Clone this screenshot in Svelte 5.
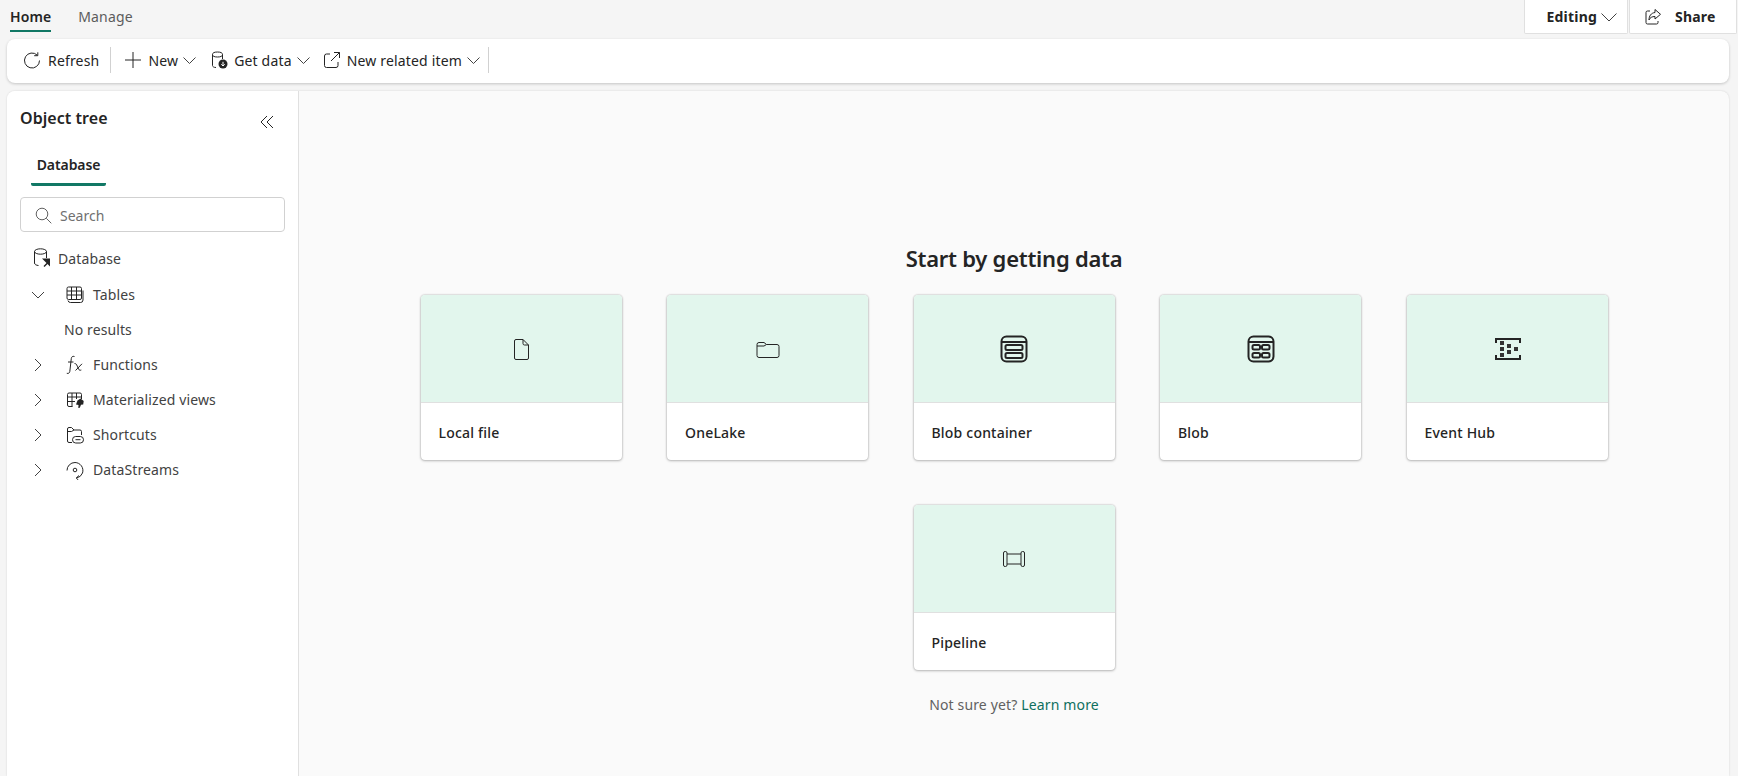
<script>
  const cards = [
    { label: 'Local file', icon: 'file' },
    { label: 'OneLake', icon: 'folder' },
    { label: 'Blob container', icon: 'container' },
    { label: 'Blob', icon: 'blob' },
    { label: 'Event Hub', icon: 'hub' },
    { label: 'Pipeline', icon: 'pipe' }
  ];
  const tree = [
    { label: 'Functions', icon: 'fx' },
    { label: 'Materialized views', icon: 'mat' },
    { label: 'Shortcuts', icon: 'short' },
    { label: 'DataStreams', icon: 'stream' }
  ];
</script>

{#snippet chevronDown()}
  <svg class="chev dd" width="13" height="14" viewBox="0 0 13 14"><path d="M.5 4.500 6.500 10.500l6-6" /></svg>
{/snippet}

{#snippet treeIcon(name)}
  <svg class="ti" width="20" height="20" viewBox="0 0 20 20">
    {#if name === 'fx'}
      <path d="M9.500 1.500c-2-.6-3 .4-3.200 2L4.800 16.500c-.3 1.600-1.300 2.200-3 1.800M3 7h5.500M9.500 8.500c1.500 0 2 .8 2.800 2.700l1.200 2.800c.6 1.200 1.500 1.500 2.800 1M17 8.800l-6.500 6.700" />
    {:else if name === 'mat'}
      <path d="M7.500 16.500H4a1.500 1.500 0 0 1-1.500-1.500V4.500A1.500 1.500 0 0 1 4 3h11a1.500 1.500 0 0 1 1.500 1.500V9M2.500 7h14M2.500 11.500H10M7 3v13.500M11.500 3v6" />
      <path class="fill" d="M15.500 8.500 12.500 10.500l-1.500 4 2.500.5-.2 3 1.500-.2 1.200-3 2.200-.3.500-3.500z" />
    {:else if name === 'short'}
      <path d="M7 17.500H4a1.500 1.500 0 0 1-1.500-1.500V4A1.500 1.500 0 0 1 4 2.500h2.500L9 5h6a1.500 1.500 0 0 1 1.500 1.500V10M2.500 6.500 6.500 6.500 9 5" />
      <rect x="7.500" y="11.500" width="11" height="6.500" rx="3.200" /><path d="M10.500 14.700h5" />
    {:else}
      <path d="M2 10.500A8 8 0 0 1 10 2.500a8 8 0 0 1 7.500 10.500 8 8 0 0 1-6 5M14 15.500l-2.800 2.500 2.300 2.200" />
      <circle cx="10" cy="10" r="1.800" />
    {/if}
  </svg>
{/snippet}

{#snippet cardIcon(name)}
  <svg class="ci" width="28" height="28" viewBox="0 0 28 28">
    {#if name === 'file'}
      <path d="M9 4.500h7l5.500 5.500v13a1.500 1.500 0 0 1-1.500 1.500H9A1.500 1.500 0 0 1 7.500 23V6A1.500 1.500 0 0 1 9 4.500zM16 4.500V8.500A1.500 1.500 0 0 0 17.500 10h4" />
    {:else if name === 'folder'}
      <path d="M5 7.500h5l2.500 2H23a2 2 0 0 1 2 2v9a2 2 0 0 1-2 2H5a2 2 0 0 1-2-2v-11a2 2 0 0 1 2-2zM3 11h7l2.500-1.500" />
    {:else if name === 'container'}
      <g class="thick">
        <rect x="1.500" y="1.500" width="25" height="25" rx="5" />
        <path d="M2 7h24" />
        <rect x="5.500" y="10" width="17" height="5" rx="1.500" />
        <rect x="5.500" y="18" width="17" height="5" rx="1.500" />
      </g>
    {:else if name === 'blob'}
      <g class="thick">
        <rect x="1.500" y="1.500" width="25" height="25" rx="5" />
        <path d="M2 7h24" />
        <rect x="5.500" y="10" width="7.500" height="4.500" rx="1.500" />
        <rect x="15" y="10" width="7.500" height="4.500" rx="1.500" />
        <rect x="5.500" y="18" width="7.500" height="4.500" rx="1.500" />
        <rect x="15" y="18" width="7.500" height="4.500" rx="1.500" />
      </g>
    {:else if name === 'hub'}
      <g class="thick">
        <path d="M3 8V4h24V8M3 20v4h24v-4" />
      </g>
      <g class="solid">
        <rect x="7" y="6" width="4" height="4" />
        <rect x="7" y="12" width="4" height="4" />
        <rect x="7" y="18" width="4" height="4" />
        <rect x="14" y="9" width="4" height="4" />
        <rect x="14" y="15" width="4" height="4" />
        <rect x="21" y="12" width="4" height="4" />
      </g>
    {:else}
      <rect x="3.500" y="6.500" width="3.500" height="15" rx="1.500" />
      <rect x="21" y="6.500" width="3.500" height="15" rx="1.500" />
      <path d="M7 9h14M7 19h14" />
    {/if}
  </svg>
{/snippet}

<div class="page">
  <header class="tabs">
    <nav class="tablist">
      <span class="tab on">Home</span>
      <span class="tab">Manage</span>
    </nav>
    <div class="actions">
      <button class="act edit">Editing
        <svg class="chev" width="16" height="16" viewBox="0 0 16 16"><path d="M.5 4.500 8 12l7.500-7.500" /></svg>
      </button>
      <button class="act share">
        <svg class="ti" width="18" height="18" viewBox="0 0 18 18"><path d="M6 3H3.500A1.500 1.500 0 0 0 2 4.500v10A1.500 1.500 0 0 0 3.500 16h9a1.500 1.500 0 0 0 1.500-1.500V13M11 1.500l5.500 4.800L11 11V8.500c-3 0-5 1-6 3.500 0-4 2-7 6-7.500z" /></svg>
        <span>Share</span>
      </button>
    </div>
  </header>

  <div class="toolbar">
    <button class="tb first">
      <svg class="ti" width="18" height="18" viewBox="0 0 18 18"><path d="M14.800 1.300v3.400h-3.600M14.300 4.200A7.500 7.500 0 1 0 16.500 9.500" /></svg>
      Refresh
    </button>
    <i class="sep"></i>
    <button class="tb new">
      <svg class="ti" width="18" height="18" viewBox="0 0 18 18"><path d="M9 1v16M1 9h16" /></svg>
      New {@render chevronDown()}
    </button>
    <button class="tb">
      <svg class="ti" width="18" height="18" viewBox="0 0 18 18"><ellipse cx="7.500" cy="3.500" rx="5" ry="2.500" /><path d="M2.500 3.500v11c0 1.200 1.500 2 3.500 2M12.500 3.500V8" /><circle class="fill" cx="13" cy="13" r="4.500" /><path class="knock" d="M13 10.800v4M11.300 13.300l1.700 1.700 1.700-1.700" /></svg>
      Get data {@render chevronDown()}
    </button>
    <button class="tb last">
      <svg class="ti" width="18" height="18" viewBox="0 0 18 18"><path d="M7 3H3.500A2 2 0 0 0 1.500 5v9.500a2 2 0 0 0 2 2H13a2 2 0 0 0 2-2V11M11 1.500h5.500V7M16.500 1.500 8 10" /></svg>
      New related item {@render chevronDown()}
    </button>
    <i class="sep"></i>
  </div>

  <div class="panel">
    <aside class="side">
      <div class="side-head">
        <h2>Object tree</h2>
        <svg class="ti" width="14" height="14" viewBox="0 0 14 14"><path d="M7 1 1 7l6 6M13 1 7 7l6 6" /></svg>
      </div>
      <div class="side-tab"><span>Database</span></div>
      <div class="search">
        <svg class="ti" width="17" height="17" viewBox="0 0 17 17"><circle cx="7" cy="7" r="5.800" /><path d="m11.300 11.300 5 5" /></svg>
        <span>Search</span>
      </div>
      <div class="row root">
        <svg class="ti" width="18" height="20" viewBox="0 0 18 20"><ellipse cx="7.500" cy="3.500" rx="6" ry="2.700" /><path d="M1.500 3.500v11.500c0 1.500 1.800 2.300 4 2.500M13.500 3.500V10" /><path class="fill" d="M9 10.500h8v8l-2.500-2.500-3 3-1-1 3-3z" /></svg>
        <span>Database</span>
      </div>
      <div class="row">
        <svg class="chev tw" width="14" height="14" viewBox="0 0 14 14"><path d="M1 4l6 6 6-6" /></svg>
        <svg class="ti" width="20" height="20" viewBox="0 0 20 20"><path d="M18 5.500V15a2.500 2.500 0 0 1-2.500 2.500H5.500a2.500 2.500 0 0 1-2.500-2M3.500 2h11.500A1.500 1.500 0 0 1 16.500 3.500V13a1.500 1.500 0 0 1-1.500 1.500H3.500A1.500 1.500 0 0 1 2 13V3.500A1.500 1.500 0 0 1 3.500 2zM2 6h14.500M2 10h14.500M6.500 2v12.500M11.500 2v12.500" /></svg>
        <span>Tables</span>
      </div>
      <div class="none">No results</div>
      {#each tree as t}
        <div class="row">
          <svg class="chev tw" width="14" height="14" viewBox="0 0 14 14"><path d="M4 1l6 6-6 6" /></svg>
          {@render treeIcon(t.icon)}
          <span>{t.label}</span>
        </div>
      {/each}
    </aside>

    <main class="main">
      <h1>Start by getting data</h1>
      <div class="grid">
        {#each cards as c}
          <div class="card">
            <div class="art">{@render cardIcon(c.icon)}</div>
            <div class="name">{c.label}</div>
          </div>
        {/each}
      </div>
      <p class="more">Not sure yet? <span>Learn more</span></p>
    </main>
  </div>
</div>

<style>
  :global(body) {
    margin: 0;
    background: #f5f5f5;
    font-family: "Noto Sans", "Open Sans", sans-serif;
    color: #242424;
    overflow: hidden;
  }
  svg { flex: none; fill: none; stroke: #242424; stroke-width: 1; display: block; }
  svg .fill { fill: #242424; stroke: none; }
  svg .knock { stroke: #fff; }
  svg .thick { stroke-width: 2; }
  svg .solid { fill: #333; stroke: none; }
  button { font: inherit; color: inherit; background: none; border: 0; padding: 0; }

  .page { height: 776px; display: flex; flex-direction: column; }

  .tabs { height: 39px; display: flex; justify-content: space-between; }
  .tablist { display: flex; gap: 27px; padding-left: 10px; }
  .tab { font-size: 14px; height: 32px; line-height: 33px; box-sizing: border-box; color: #5c5c5c; letter-spacing: 0.15px; }
  .tab.on { color: #242424; font-weight: 600; border-bottom: 2px solid #117865; letter-spacing: 0.1px; }
  .actions { display: flex; gap: 1px; padding-right: 1px; }
  .act {
    height: 34px;
    background: #fff;
    border: 1px solid #e0e0e0;
    border-top: 0;
    border-radius: 0 0 2px 2px;
    box-sizing: border-box;
    font-size: 14px;
    font-weight: 700;
    display: flex;
    align-items: center;
    letter-spacing: 0.2px;
  }
  .edit { width: 104px; justify-content: flex-end; padding-right: 10px; gap: 4px; }
  .share { width: 108px; padding-left: 14px; gap: 13px; }

  .toolbar {
    height: 44px;
    box-sizing: border-box;
    padding-bottom: 2px;
    margin: 0 9px 8px 7px;
    background: #fff;
    border-radius: 8px;
    box-shadow: 0 1px 3px rgba(0, 0, 0, 0.2);
    display: flex;
    align-items: center;
    padding-left: 16px;
    font-size: 14px;
    flex: none;
  }
  .tb { display: flex; align-items: center; gap: 6px; letter-spacing: 0.17px; margin-right: 13px; font-size: 14px; }
  .tb.first { margin-right: 11px; gap: 7px; }
  .tb.last { margin-right: 8px; }
  .new { margin-left: 13px; margin-right: 14px; }
  .chev { stroke: #424242; }
  .dd { margin-left: -1px; }
  .sep { width: 1px; height: 26px; background: #d1d1d1; }

  .panel {
    flex: 1;
    margin: 0 9px 0 7px;
    background: #fafafa;
    border-radius: 8px 8px 0 0;
    box-shadow: 0 0 2px rgba(0, 0, 0, 0.15);
    display: flex;
    min-height: 0;
    overflow: hidden;
  }
  .side {
    width: 292px;
    flex: none;
    box-sizing: border-box;
    background: #fff;
    border-right: 1px solid #e0e0e0;
    padding: 0 13px;
    font-size: 14px;
  }
  .side-head { display: flex; justify-content: space-between; height: 50px; padding-right: 11px; padding-top: 23px; box-sizing: border-box; }
  .side-head svg { margin-top: 1px; }
  h2 { margin: -8px 0 0; font-size: 16px; font-weight: 600; letter-spacing: 0.05px; line-height: 24px; }
  .side-tab { height: 45px; margin-left: 11px; width: 75px; border-bottom: 3px solid #117865; border-radius: 2px; box-sizing: border-box; display: flex; justify-content: center; padding-top: 12px; }
  .side-tab span { font-weight: 600; font-size: 14px; letter-spacing: -0.1px; line-height: 24px; }
  .search {
    margin-top: 11px;
    height: 35px;
    box-sizing: border-box;
    border: 1px solid #d1d1d1;
    border-radius: 4px;
    display: flex;
    align-items: center;
    gap: 8px;
    padding-left: 14px;
    padding-top: 1px;
    color: #707070;
  }
  .search svg { stroke: #616161; }
  .row { height: 35px; display: flex; align-items: center; gap: 8px; padding-left: 11px; letter-spacing: 0.12px; color: #424242; }
  .row.root { margin-top: 8px; padding-left: 13px; gap: 7px; height: 37px; padding-bottom: 1px; box-sizing: border-box; }
  .row .tw { margin-right: 12px; }
  .none { height: 35px; line-height: 35px; padding-left: 44px; color: #424242; letter-spacing: 0.1px; }

  .main { flex: 1; display: flex; flex-direction: column; align-items: center; padding-top: 150px; }
  h1 { margin: 0 0 20px; font-size: 22px; line-height: 34px; font-weight: 600; letter-spacing: -0.25px; color: #242424; }
  .grid { width: 1188px; display: flex; flex-wrap: wrap; justify-content: center; gap: 45px 45.5px; }
  .card {
    width: 201px;
    height: 165px;
    background: #fff;
    border-radius: 4px;
    box-shadow: 0 0 2px rgba(0, 0, 0, 0.3), 0 1px 3px rgba(0, 0, 0, 0.2);
    overflow: hidden;
  }
  .art { height: 107px; background: #e2f6ed; border-bottom: 1px solid #e0e0e0; display: flex; align-items: center; justify-content: center; }
  .name { padding: 20px 18px 0; font-size: 14px; font-weight: 500; line-height: 20px; letter-spacing: 0.2px; }
  .more { margin: 25px 0 0; font-size: 14px; color: #616161; line-height: 20px; letter-spacing: 0.15px; }
  .more span { color: #0e6f5e; }
</style>
